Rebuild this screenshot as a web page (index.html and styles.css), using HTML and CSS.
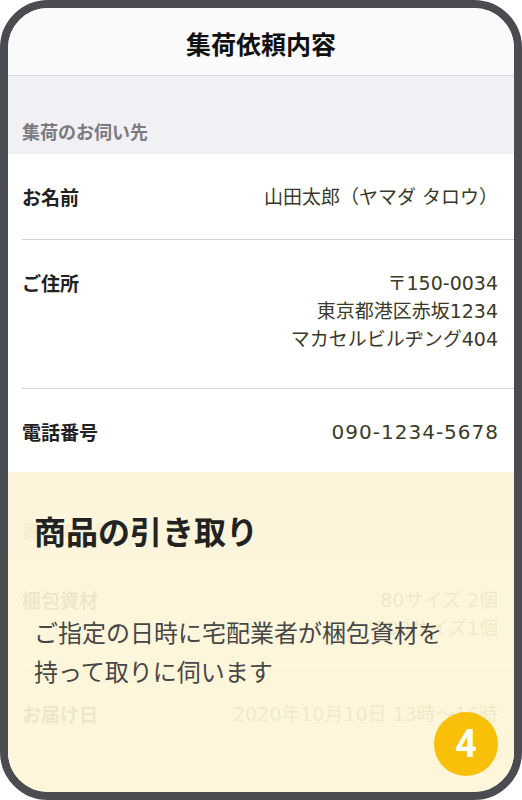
FILE: index.html
```html
<!DOCTYPE html>
<html lang="ja">
<head>
    <meta charset="UTF-8">
    <meta name="viewport" content="width=device-width, initial-scale=1.0">
    <title>集荷依頼内容</title>
    <link rel="stylesheet" href="styles.css">
</head>
<body>
    <div class="phone">
        <header class="nav">集荷依頼内容</header>

        <div class="section-label">集荷のお伺い先</div>
        <div class="list">
            <div class="row">
                <span class="label">お名前</span>
                <span class="value">山田太郎（ヤマダ タロウ）</span>
            </div>
            <div class="row row-address">
                <span class="label">ご住所</span>
                <span class="value">〒150-0034<br>東京都港区赤坂1234<br>マカセルビルヂング404</span>
            </div>
            <div class="row row-phone">
                <span class="label">電話番号</span>
                <span class="value value-phone">090-1234-5678</span>
            </div>
        </div>

        <div class="section-label section-label-next">資材のお届け先</div>
        <div class="list">
            <div class="row row-material">
                <span class="label">梱包資材</span>
                <span class="value">80サイズ 2個<br>100サイズ1個</span>
            </div>
            <div class="row">
                <span class="label">お届け日</span>
                <span class="value">2020年10月10日 13時～16時</span>
            </div>
        </div>

        <div class="overlay">
            <h2 class="overlay-title">商品の引き取り</h2>
            <p class="overlay-text">ご指定の日時に宅配業者が梱包資材を<br>持って取りに伺います</p>
        </div>
        <div class="badge">4</div>
    </div>
</body>
</html>
```

FILE: styles.css
```css
body {
    margin: 0;
    background: #fff;
    font-family: "Noto Sans CJK JP", "Noto Sans", sans-serif;
}
.phone {
    position: relative;
    width: 522px;
    height: 800px;
    box-sizing: border-box;
    border: 8px solid #4b4c51;
    border-radius: 48px;
    overflow: hidden;
    background: #fff;
}
.nav {
    height: 68px;
    box-sizing: border-box;
    display: flex;
    align-items: center;
    justify-content: center;
    padding-top: 2px;
    background: #fafafa;
    border-bottom: 1px solid #d6d6d8;
    font-size: 25px;
    font-weight: bold;
    color: #111;
}
.section-label {
    height: 78px;
    box-sizing: border-box;
    display: flex;
    align-items: flex-end;
    padding: 0 14px 10px;
    background: #f0f0f5;
    font-size: 18px;
    font-weight: bold;
    color: #7b7b80;
}
.section-label-next {
    height: 84px;
    padding-bottom: 14px;
}
.list {
    background: #fff;
    padding-left: 14px;
}
.row {
    display: flex;
    justify-content: space-between;
    align-items: flex-start;
    padding: 29px 16px 28px 0;
    border-bottom: 1px solid #d2d2d4;
    line-height: 28px;
}
.row-address {
    padding-bottom: 35px;
}
.row-phone {
    border-bottom: none;
    padding-bottom: 27px;
}
.label {
    font-size: 19px;
    font-weight: bold;
    color: #222;
}
.value {
    font-family: "DejaVu Sans", "Noto Sans CJK JP", sans-serif;
    font-size: 19px;
    color: #3a3a28;
    text-align: right;
}
.value-phone {
    font-size: 20px;
    letter-spacing: 1px;
    margin-right: -1px;
}
.overlay {
    position: absolute;
    left: 0;
    right: 0;
    top: 464px;
    bottom: 0;
    padding: 38px 26px 0;
    background: rgba(253, 245, 216, 0.93);
}
.overlay-title {
    margin: 0;
    font-size: 32px;
    font-weight: bold;
    line-height: 40px;
    color: #222;
}
.overlay-text {
    margin: 62px 0 0;
    font-size: 24px;
    line-height: 39px;
    color: #474747;
}
.badge {
    position: absolute;
    right: 16px;
    bottom: 16px;
    width: 64px;
    height: 64px;
    border-radius: 50%;
    background: #f9c00a;
    color: #fff;
    font-family: Roboto, "Noto Sans", sans-serif;
    font-size: 38px;
    font-weight: bold;
    display: flex;
    align-items: center;
    justify-content: center;
}
```
